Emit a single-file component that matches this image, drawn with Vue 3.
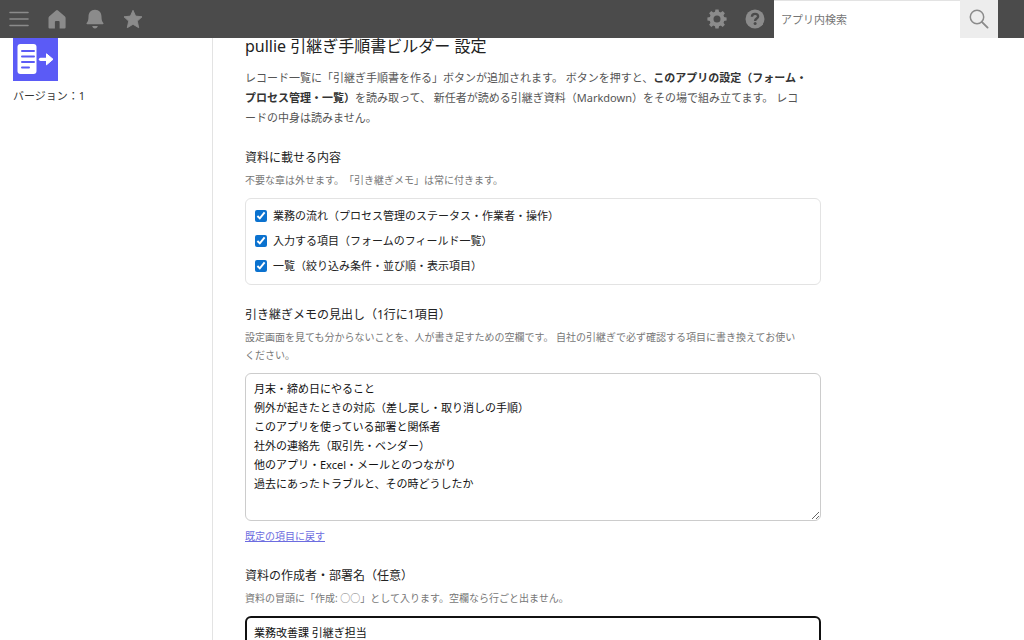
<script setup>
import { ref } from 'vue'

const defaults = [
  '月末・締め日にやること',
  '例外が起きたときの対応（差し戻し・取り消しの手順）',
  'このアプリを使っている部署と関係者',
  '社外の連絡先（取引先・ベンダー）',
  '他のアプリ・Excel・メールとのつながり',
  '過去にあったトラブルと、その時どうしたか'
].join('\n')

const sections = ref([
  { id: 'flow', label: '業務の流れ（プロセス管理のステータス・作業者・操作）', on: true },
  { id: 'fields', label: '入力する項目（フォームのフィールド一覧）', on: true },
  { id: 'views', label: '一覧（絞り込み条件・並び順・表示項目）', on: true }
])
const memo = ref(defaults)
const author = ref('業務改善課 引継ぎ担当')
const query = ref('')
</script>

<template>
  <div class="page">
    <header class="topbar">
      <nav class="icons">
        <button type="button" aria-label="メニュー">
          <svg viewBox="0 0 20 20"><path d="M1 3.500h18M1 10h18M1 16.500h18" fill="none" stroke="currentColor" stroke-width="1.600" stroke-linecap="round" /></svg>
        </button>
        <button type="button" aria-label="ホーム">
          <svg viewBox="0 0 20 20"><path d="M10 1Q10.500 1 11 1.400L18 7.600Q18.600 8.200 18.600 9V18.400Q18.600 19.500 17.500 19.500H12.600V13Q12.600 12 11.600 12H8.900Q7.900 12 7.900 13V19.500H2.600Q1.500 19.500 1.500 18.400V9Q1.500 8.200 2.100 7.600L9 1.400Q9.500 1 10 1Z" fill="currentColor" /></svg>
        </button>
        <button type="button" aria-label="通知">
          <svg viewBox="0 0 20 20"><path d="M10 .8C5.700 .8 3.500 4 3.500 7.600C3.500 11.500 2.800 13 1.600 14.100Q1 15.200 2.200 15.200H17.800Q19 15.200 18.400 14.100C17.200 13 16.500 11.500 16.500 7.600C16.500 4 14.300 .8 10 .8ZM7.200 17H12.800C12.500 18.700 11.500 19.400 10 19.400S7.500 18.700 7.200 17Z" fill="currentColor" /></svg>
        </button>
        <button type="button" aria-label="お気に入り">
          <svg viewBox="0 0 20 20"><path d="M10 1.300L12.600 7.100L19 7.800L14.300 12.100L15.700 18.700L10 15.300L4.300 18.700L5.700 12.100L1 7.800L7.400 7.100Z" fill="currentColor" stroke="currentColor" stroke-width=".9" stroke-linejoin="round" /></svg>
        </button>
      </nav>
      <div class="tools">
        <button type="button" aria-label="設定">
          <svg viewBox="0 0 20 20">
            <circle cx="10" cy="10" r="5.500" fill="none" stroke="currentColor" stroke-width="4" />
            <path d="M8.400 .4h3.200l.7 4H7.700zM8.400 19.600h3.200l.7-4H7.700zM.4 8.400v3.200l4 .7V7.700zM19.600 8.400v3.200l-4 .7V7.700zM2.100 4.300l2.200-2.200 3.300 2.300-3.200 3.200zM17.900 4.300l-2.200-2.200-3.300 2.300 3.200 3.200zM2.100 15.700l2.200 2.200 3.300-2.300-3.200-3.200zM17.900 15.700l-2.200 2.200-3.300-2.300 3.200-3.200z" fill="currentColor" />
          </svg>
        </button>
        <button type="button" aria-label="ヘルプ">
          <svg viewBox="0 0 20 20">
            <circle cx="10" cy="10" r="9.500" fill="currentColor" />
            <path d="M6.900 7.700C7 5.800 8.200 4.900 10 4.900C11.900 4.900 13.100 5.900 13.100 7.500C13.100 9.600 10.100 9.600 10.100 12" fill="none" stroke="#4b4b4b" stroke-width="2.400" />
            <circle cx="10.100" cy="14.600" r="1.500" fill="#4b4b4b" />
          </svg>
        </button>
      </div>
      <form class="search" role="search" @submit.prevent>
        <input v-model="query" type="text" placeholder="アプリ内検索" aria-label="アプリ内検索" />
        <button type="submit" aria-label="検索">
          <svg viewBox="0 0 20 20"><circle cx="8" cy="8" r="6.700" fill="none" stroke="currentColor" stroke-width="1.500" /><path d="M12.800 12.800L18.600 18.600" stroke="currentColor" stroke-width="1.900" stroke-linecap="round" /></svg>
        </button>
      </form>
    </header>

    <div class="body">
      <aside class="side">
        <svg class="logo" viewBox="0 0 45 43" aria-hidden="true">
          <rect width="45" height="43" fill="#5b5bf6" />
          <rect x="4.500" y="6" width="19" height="30" rx="3" fill="#fff" />
          <path d="M9 13h12M9 18.500h12M9 24h12M9 29.500h7" stroke="#5b5bf6" stroke-width="2" stroke-linecap="round" />
          <path d="M27.500 21.300H34" stroke="#fff" stroke-width="3.200" stroke-linecap="round" />
          <path d="M33.500 15.800L40 21.300L33.500 26.800Z" fill="#fff" stroke="#fff" stroke-width="1" stroke-linejoin="round" />
        </svg>
        <p>バージョン：1</p>
      </aside>

      <main class="main">
        <h1>pullie 引継ぎ手順書ビルダー 設定</h1>
        <p class="lead">レコード一覧に「引継ぎ手順書を作る」ボタンが追加されます。 ボタンを押すと、<strong>このアプリの設定（フォーム・プロセス管理・一覧）</strong>を読み取って、 新任者が読める引継ぎ資料（Markdown）をその場で組み立てます。 レコ<br />ードの中身は読みません。</p>

        <section>
          <h2>資料に載せる内容</h2>
          <p class="hint">不要な章は外せます。「引き継ぎメモ」は常に付きます。</p>
          <div class="options">
            <label v-for="s in sections" :key="s.id">
              <input v-model="s.on" type="checkbox" />
              <span>{{ s.label }}</span>
            </label>
          </div>
        </section>

        <section>
          <h2><label for="memo">引き継ぎメモの見出し（1行に1項目）</label></h2>
          <p class="hint">設定画面を見ても分からないことを、人が書き足すための空欄です。 自社の引継ぎで必ず確認する項目に書き換えてお使いください。</p>
          <textarea id="memo" v-model="memo" rows="7" spellcheck="false"></textarea>
          <a class="reset" href="#" @click.prevent="memo = defaults">既定の項目に戻す</a>
        </section>

        <section>
          <h2><label for="author">資料の作成者・部署名（任意）</label></h2>
          <p class="hint">資料の冒頭に「作成: ○○」として入ります。空欄なら行ごと出ません。</p>
          <input id="author" v-model="author" class="author" type="text" />
        </section>
      </main>
    </div>
  </div>
</template>

<style>
body {
  background: #fff;
}
</style>

<style scoped>
.page {
  height: 100vh;
  overflow: hidden;
  display: flex;
  flex-direction: column;
  font-family: "Noto Sans", "Noto Sans CJK JP", sans-serif;
  font-size: 11px;
  color: #222;
  text-spacing-trim: space-all;
}
h1, h2, p {
  margin: 0;
  font-weight: 400;
}
button, input, textarea {
  font: inherit;
  box-sizing: border-box;
  margin: 0;
}
button {
  border: 0;
  padding: 0;
  background: none;
  color: #8b8b8b;
  display: flex;
  align-items: center;
  justify-content: center;
}
svg {
  display: block;
}
.topbar {
  flex: none;
  height: 38px;
  background: #4b4b4b;
  display: flex;
  align-items: center;
  padding-right: 26px;
}
.icons, .tools {
  display: flex;
}
.icons button, .tools button {
  width: 38px;
  height: 38px;
}
.icons svg, .tools svg {
  width: 20px;
  height: 20px;
}
.tools {
  margin-left: auto;
}
.search {
  display: flex;
  height: 38px;
}
.search input {
  width: 186px;
  border: 0;
  border-top: 1px solid #e3e3e3;
  padding: 0 7px;
  background: #fff;
  outline: none;
  color: #333;
}
.search input::placeholder {
  color: #757575;
  opacity: 1;
}
.search button {
  width: 38px;
  background: #ededed;
}
.body {
  flex: 1;
  min-height: 0;
  display: flex;
}
.side {
  flex: none;
  width: 213px;
  box-sizing: border-box;
  border-right: 1px solid #e3e3e3;
  padding-left: 13px;
}
.side p {
  margin-top: 5px;
  line-height: 20px;
  color: #333;
}
.search svg {
  width: 20px;
  height: 20px;
}
.logo {
  width: 45px;
  height: 43px;
}
.main {
  flex: 1;
  max-width: 576px;
  padding: 0 32px;
}
h1 {
  font-size: 16px;
  line-height: 16px;
  color: #222;
}
.lead {
  margin-top: 14px;
  padding-right: 8px;
  line-height: 20px;
  color: #555;
}
.lead strong {
  font-weight: 700;
  color: #333;
}
section {
  margin-top: 20px;
}
h2 {
  font-size: 12px;
  line-height: 20px;
}
.hint {
  margin-top: 3px;
  padding-right: 16px;
  font-size: 10px;
  line-height: 18px;
  color: #777;
}
.options {
  margin-top: 9px;
  border: 1px solid #e3e3e3;
  border-radius: 6px;
  padding: 4px 9px 6px;
}
.options label {
  display: flex;
  align-items: center;
  gap: 6px;
  line-height: 25px;
}
.options input {
  width: 12px;
  height: 12px;
  accent-color: #0b72cf;
}
textarea, .author {
  display: block;
  width: 100%;
  margin-top: 9px;
  border: 1px solid #ccc;
  border-radius: 6px;
  padding: 5px 8px 8px;
  background: #fff;
  color: #111;
  outline: none;
}
textarea {
  line-height: 19px;
  resize: vertical;
}
.reset {
  display: inline-block;
  margin-top: 5px;
  font-size: 10px;
  line-height: 20px;
  color: #6c6ce0;
}
.author {
  border: 2px solid #111;
  padding: 5px 7px;
  line-height: 19px;
}
</style>
